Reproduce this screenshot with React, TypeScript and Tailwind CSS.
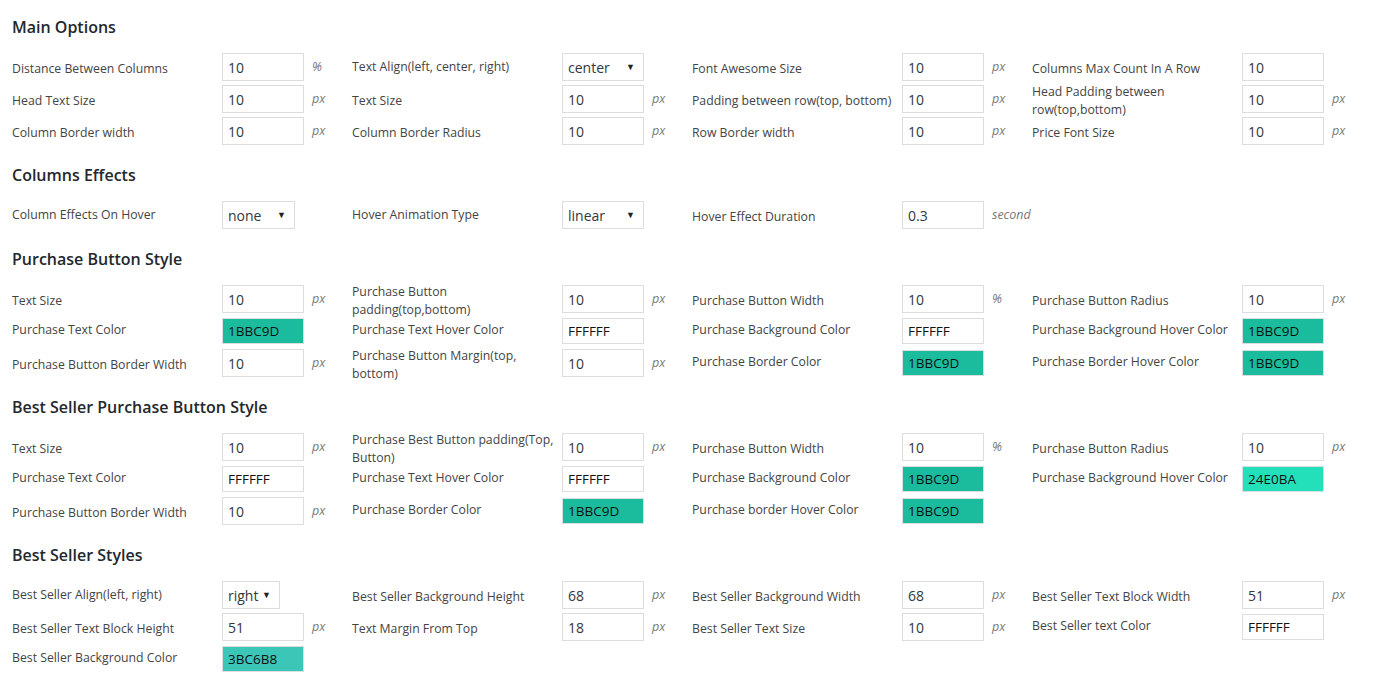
import React from 'react'

type Field =
  | { label: string; kind: 'text'; value: string; unit?: string }
  | { label: string; kind: 'select'; value: string; width: string }
  | { label: string; kind: 'color'; value: string; bg: string }
  | null

interface Section {
  title: string
  rows: Field[][]
}

const GREEN = 'bg-[#1bbc9d]'

const sections: Section[] = [
  {
    title: 'Main Options',
    rows: [
      [
        { label: 'Distance Between Columns', kind: 'text', value: '10', unit: '%' },
        { label: 'Text Align(left, center, right)', kind: 'select', value: 'center', width: 'w-[82px]' },
        { label: 'Font Awesome Size', kind: 'text', value: '10', unit: 'px' },
        { label: 'Columns Max Count In A Row', kind: 'text', value: '10' },
      ],
      [
        { label: 'Head Text Size', kind: 'text', value: '10', unit: 'px' },
        { label: 'Text Size', kind: 'text', value: '10', unit: 'px' },
        { label: 'Padding between row(top, bottom)', kind: 'text', value: '10', unit: 'px' },
        { label: 'Head Padding between\nrow(top,bottom)', kind: 'text', value: '10', unit: 'px' },
      ],
      [
        { label: 'Column Border width', kind: 'text', value: '10', unit: 'px' },
        { label: 'Column Border Radius', kind: 'text', value: '10', unit: 'px' },
        { label: 'Row Border width', kind: 'text', value: '10', unit: 'px' },
        { label: 'Price Font Size', kind: 'text', value: '10', unit: 'px' },
      ],
    ],
  },
  {
    title: 'Columns Effects',
    rows: [
      [
        { label: 'Column Effects On Hover', kind: 'select', value: 'none', width: 'w-[73px]' },
        { label: 'Hover Animation Type', kind: 'select', value: 'linear', width: 'w-[82px]' },
        { label: 'Hover Effect Duration', kind: 'text', value: '0.3', unit: 'second' },
        null,
      ],
    ],
  },
  {
    title: 'Purchase Button Style',
    rows: [
      [
        { label: 'Text Size', kind: 'text', value: '10', unit: 'px' },
        { label: 'Purchase Button\npadding(top,bottom)', kind: 'text', value: '10', unit: 'px' },
        { label: 'Purchase Button Width', kind: 'text', value: '10', unit: '%' },
        { label: 'Purchase Button Radius', kind: 'text', value: '10', unit: 'px' },
      ],
      [
        { label: 'Purchase Text Color', kind: 'color', value: '1BBC9D', bg: GREEN },
        { label: 'Purchase Text Hover Color', kind: 'color', value: 'FFFFFF', bg: 'bg-white' },
        { label: 'Purchase Background Color', kind: 'color', value: 'FFFFFF', bg: 'bg-white' },
        { label: 'Purchase Background Hover Color', kind: 'color', value: '1BBC9D', bg: GREEN },
      ],
      [
        { label: 'Purchase Button Border Width', kind: 'text', value: '10', unit: 'px' },
        { label: 'Purchase Button Margin(top,\nbottom)', kind: 'text', value: '10', unit: 'px' },
        { label: 'Purchase Border Color', kind: 'color', value: '1BBC9D', bg: GREEN },
        { label: 'Purchase Border Hover Color', kind: 'color', value: '1BBC9D', bg: GREEN },
      ],
    ],
  },
  {
    title: 'Best Seller Purchase Button Style',
    rows: [
      [
        { label: 'Text Size', kind: 'text', value: '10', unit: 'px' },
        { label: 'Purchase Best Button padding(Top,\nButton)', kind: 'text', value: '10', unit: 'px' },
        { label: 'Purchase Button Width', kind: 'text', value: '10', unit: '%' },
        { label: 'Purchase Button Radius', kind: 'text', value: '10', unit: 'px' },
      ],
      [
        { label: 'Purchase Text Color', kind: 'color', value: 'FFFFFF', bg: 'bg-white' },
        { label: 'Purchase Text Hover Color', kind: 'color', value: 'FFFFFF', bg: 'bg-white' },
        { label: 'Purchase Background Color', kind: 'color', value: '1BBC9D', bg: GREEN },
        { label: 'Purchase Background Hover Color', kind: 'color', value: '24E0BA', bg: 'bg-[#24e0ba]' },
      ],
      [
        { label: 'Purchase Button Border Width', kind: 'text', value: '10', unit: 'px' },
        { label: 'Purchase Border Color', kind: 'color', value: '1BBC9D', bg: GREEN },
        { label: 'Purchase border Hover Color', kind: 'color', value: '1BBC9D', bg: GREEN },
        null,
      ],
    ],
  },
  {
    title: 'Best Seller Styles',
    rows: [
      [
        { label: 'Best Seller Align(left, right)', kind: 'select', value: 'right', width: 'w-[58px]' },
        { label: 'Best Seller Background Height', kind: 'text', value: '68', unit: 'px' },
        { label: 'Best Seller Background Width', kind: 'text', value: '68', unit: 'px' },
        { label: 'Best Seller Text Block Width', kind: 'text', value: '51', unit: 'px' },
      ],
      [
        { label: 'Best Seller Text Block Height', kind: 'text', value: '51', unit: 'px' },
        { label: 'Text Margin From Top', kind: 'text', value: '18', unit: 'px' },
        { label: 'Best Seller Text Size', kind: 'text', value: '10', unit: 'px' },
        { label: 'Best Seller text Color', kind: 'color', value: 'FFFFFF', bg: 'bg-white' },
      ],
      [
        { label: 'Best Seller Background Color', kind: 'color', value: '3BC6B8', bg: 'bg-[#3bc6b8]' },
        null,
        null,
        null,
      ],
    ],
  },
]

function Cell({ field }: { field: Field }) {
  if (!field) return <div className="w-[340px]" />

  // labels next to text inputs sit a touch lower, colour labels a touch higher
  const labelShift =
    field.kind === 'text' ? 'pt-[3px]' : field.kind === 'color' ? 'pb-[2px]' : ''

  return (
    <div className="w-[340px] flex items-center">
      <div className={`w-[210px] shrink-0 whitespace-pre leading-[18px] text-[12.25px] text-[#444] ${labelShift}`}>
        {field.label}
      </div>

      {field.kind === 'text' && (
        <>
          <div className="w-[82px] h-[28px] border border-[#dddddd] bg-white flex items-center pl-[5px] text-[14px] text-[#32373c]">
            {field.value}
          </div>
          {field.unit && (
            <span className="ml-2 text-[12.5px] italic text-[#777]">{field.unit}</span>
          )}
        </>
      )}

      {field.kind === 'select' && (
        <div className={`${field.width} h-[28px] border border-[#dddddd] bg-white flex items-center justify-between pl-[5px] pr-[8px] text-[14px] text-[#32373c]`}>
          <span>{field.value}</span>
          <span className="text-[9px] text-[#222]">▼</span>
        </div>
      )}

      {field.kind === 'color' && (
        <div className={`w-[82px] h-[26px] border border-[#dddddd] ${field.bg} flex items-center pl-[5px] text-[13.5px] text-[#111]`}>
          {field.value}
        </div>
      )}
    </div>
  )
}

export default function App() {
  return (
    <div
      className="min-h-screen bg-white px-3 pt-[15px] pb-4"
      style={{ fontFamily: '"Open Sans", "Noto Sans", sans-serif' }}
    >
      {sections.map(section => (
        <section key={section.title} className="mb-4">
          <h2 className="h-6 flex items-center text-[16px] font-semibold text-[#23282d]">
            {section.title}
          </h2>
          <div className="mt-3">
            {section.rows.map((row, i) => (
              <div key={i} className="h-8 flex">
                {row.map((field, j) => (
                  <Cell key={j} field={field} />
                ))}
              </div>
            ))}
          </div>
        </section>
      ))}
    </div>
  )
}
